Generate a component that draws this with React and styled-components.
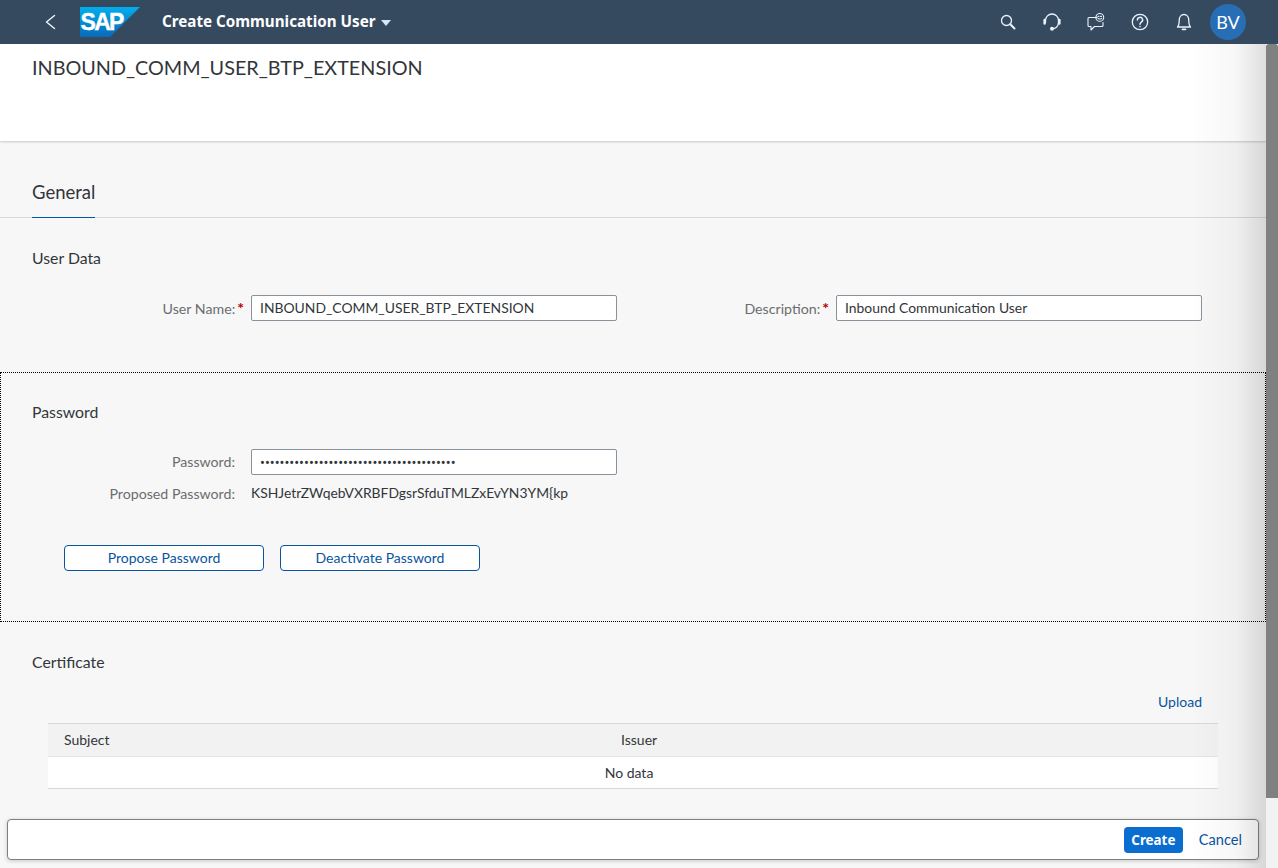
import React from 'react';
import styled, {createGlobalStyle} from 'styled-components';

const FONT = '"Lato", "Noto Sans", Arial, sans-serif';
const WIDE_FONT = '"Noto Sans", "Open Sans", Arial, sans-serif';

const Global = createGlobalStyle`
  html, body {
    margin: 0;
    height: 100%;
    overflow: hidden;
  }
  body {
    font-family: ${FONT};
    font-size: 14px;
    color: #32363a;
    background: #f7f7f7;
  }
`;

const Shell = styled.div`
  height: 868px;
  display: flex;
  flex-direction: column;
  position: relative;
  overflow: hidden;
`;

const TopBar = styled.header`
  height: 44px;
  flex: none;
  background: #354a5f;
  display: flex;
  align-items: center;
  color: #fff;
`;

const IconButton = styled.button`
  width: 44px;
  height: 44px;
  padding: 0;
  border: none;
  background: none;
  color: #e8f3ff;
  display: flex;
  align-items: center;
  justify-content: center;
`;

const BackButton = styled(IconButton)`
  width: 38px;
  margin-left: 42px;
  justify-content: flex-start;
`;

const Logo = styled.svg`
  width: 60px;
  height: 30px;
  flex: none;
`;

const AppTitle = styled.div`
  margin-left: 22px;
  font-family: ${WIDE_FONT};
  font-size: 15.2px;
  font-weight: 700;
  display: flex;
  align-items: center;
  gap: 5px;
  padding-bottom: 2px;
`;

const Caret = styled.span`
  width: 0;
  height: 0;
  border-left: 5px solid transparent;
  border-right: 5px solid transparent;
  border-top: 6px solid #d1e8ff;
  margin-top: 3px;
`;

const BarActions = styled.div`
  margin-left: auto;
  margin-right: 32px;
  display: flex;
  align-items: center;
`;

const Avatar = styled.div`
  width: 36px;
  height: 36px;
  border-radius: 50%;
  background: #286eb4;
  color: #fff;
  font-size: 18px;
  display: flex;
  align-items: center;
  justify-content: center;
  margin-left: 4px;
`;

const Body = styled.div`
  flex: 1;
  min-height: 0;
  display: flex;
`;

const Page = styled.main`
  flex: 1;
  min-width: 0;
  position: relative;
  overflow: hidden;
`;

const EdgeShade = styled.div`
  position: absolute;
  top: 0;
  right: 0;
  bottom: 0;
  width: 76px;
  background: linear-gradient(to right, rgba(0, 0, 0, 0), rgba(0, 0, 0, .03) 60%, rgba(0, 0, 0, .13));
  pointer-events: none;
  z-index: 3;
`;

const ScrollTrack = styled.div`
  width: 12px;
  flex: none;
  background: #f2f2f2;
`;

const ScrollThumb = styled.div`
  height: 754px;
  background: #808080;
  border-radius: 3px 3px 0 0;
`;

const TitleArea = styled.div`
  height: 97px;
  box-sizing: border-box;
  background: #fff;
  padding: 11px 32px 0;
  box-shadow: 0 1px 2px rgba(0, 0, 0, .2);
  position: relative;
`;

const Title = styled.h1`
  margin: 0;
  font-size: 19.8px;
  font-weight: 400;
  line-height: 25px;
`;

const Tabs = styled.div`
  height: 77px;
  box-sizing: border-box;
  border-bottom: 1px solid #d9d9d9;
  padding: 0 32px;
  display: flex;
  align-items: flex-end;
`;

const Tab = styled.div`
  height: 53px;
  box-sizing: border-box;
  margin-bottom: -1px;
  border-bottom: 1px solid #0854a0;
  font-size: 18.5px;
  line-height: 54px;
`;

const Section = styled.section`
  box-sizing: border-box;
  height: ${p => p.$height}px;
  padding: ${p => p.$top}px 32px 0;
  outline: ${p => (p.$focused ? '1px dotted #000' : 'none')};
  outline-offset: -1px;
`;

const SectionTitle = styled.h2`
  margin: 0;
  font-size: 15.8px;
  font-weight: 400;
  line-height: 20px;
`;

const FormGrid = styled.div`
  display: grid;
  grid-template-columns: 203px 366px 219px 366px;
  margin-top: 27px;
  align-items: center;
`;

const FieldLabel = styled.label`
  color: #6a6d70;
  text-align: right;
  white-space: nowrap;
  font-size: 14.2px;
  padding-bottom: 2px;
  margin-right: ${p => (p.$required ? '-9px' : '0')};
`;

const Star = styled.span`
  color: #b00;
  margin-left: 2px;
  font-size: 16px;
  font-weight: 700;
`;

const TextInput = styled.input`
  box-sizing: border-box;
  height: 26px;
  width: 366px;
  margin-left: 16px;
  padding: 0 8px 2px;
  border: 1px solid #89919a;
  border-radius: 2px;
  background: #fff;
  font: 13.9px ${FONT};
  color: #32363a;
`;

const PasswordInput = styled(TextInput)`
  font: 13px ${WIDE_FONT};
  padding-bottom: 0;
`;

const PasswordGrid = styled.div`
  display: grid;
  grid-template-columns: 203px 366px;
  row-gap: 7px;
  margin-top: 27px;
  align-items: center;
`;

const PlainValue = styled.div`
  font-size: 13.87px;
  white-space: nowrap;
  line-height: 22px;
  margin-left: 16px;
  padding-bottom: 2px;
`;

const ButtonRow = styled.div`
  display: flex;
  gap: 16px;
  margin: 39px 0 0 32px;
`;

const OutlineButton = styled.button`
  box-sizing: border-box;
  width: 200px;
  height: 26px;
  padding: 0 0 2px;
  border: 1px solid #0854a0;
  border-radius: 4px;
  background: #fff;
  color: #0854a0;
  font: 14px ${FONT};
`;

const TableTools = styled.div`
  display: flex;
  justify-content: flex-end;
  margin: 20px 32px 0 0;
`;

const LinkText = styled.a`
  color: #0854a0;
  font-size: 14px;
  line-height: 20px;
`;

const CancelLink = styled(LinkText)`
  font-size: 14.6px;
`;

const Table = styled.div`
  margin: 11px 16px 0 16px;
  width: 1170px;
`;

const TableHead = styled.div`
  height: 34px;
  box-sizing: border-box;
  background: #f2f2f2;
  border-top: 1px solid #d9d9d9;
  border-bottom: 1px solid #e5e5e5;
  display: grid;
  grid-template-columns: 557px 1fr;
  align-items: center;
  font-size: 14px;
  padding: 0 0 2px 16px;
`;

const EmptyRow = styled.div`
  height: 32px;
  box-sizing: border-box;
  background: #fff;
  border-bottom: 1px solid #d9d9d9;
  display: flex;
  align-items: center;
  justify-content: center;
  padding-right: 8px;
  font-size: 14px;
`;

const Footer = styled.footer`
  position: absolute;
  left: 7px;
  right: 7px;
  bottom: 8px;
  height: 41px;
  box-sizing: border-box;
  background: #fff;
  border: 1px solid #7f7f7f;
  border-radius: 4px;
  box-shadow: 0 1px 4px rgba(0, 0, 0, .2);
  display: flex;
  align-items: center;
  justify-content: flex-end;
  padding-right: 16px;
  gap: 16px;
  z-index: 2;
`;

const PrimaryButton = styled.button`
  box-sizing: border-box;
  width: 59px;
  height: 26px;
  padding: 1px 0 0;
  border: none;
  border-radius: 4px;
  background: #0a6ed1;
  color: #fff;
  font: 700 13.4px ${WIDE_FONT};
`;

const stroke = {
  fill: 'none',
  stroke: 'currentColor',
  strokeWidth: 1.3,
  strokeLinecap: 'round',
  strokeLinejoin: 'round'
};

const BackIcon = () => (
  <svg width="18" height="18" viewBox="0 0 18 18"><path d="M12.5 2.5 L4.5 9 L12.5 15.5" {...stroke} strokeWidth="1.5" /></svg>
);

const SearchIcon = () => (
  <svg width="18" height="18" viewBox="0 0 18 18" {...stroke}>
    <circle cx="7.5" cy="7.5" r="5" />
    <path d="M11.3 11.3 L15.5 15.5" strokeWidth="2" />
  </svg>
);

const HeadsetIcon = () => (
  <svg width="18" height="18" viewBox="0 0 18 18" {...stroke}>
    <path d="M2.5 9.5 V7.5 A6.5 6.5 0 0 1 15.5 7.5 V9.5 A6.5 7 0 0 1 10.5 15.7" />
    <path d="M1.6 7 V10.6" strokeWidth="2.4" />
    <path d="M16.4 7 V10.6" strokeWidth="2.4" />
    <circle cx="9" cy="15.8" r="1.3" fill="currentColor" />
  </svg>
);

const FeedbackIcon = () => (
  <svg width="18" height="18" viewBox="0 0 18 18" {...stroke} strokeWidth="1.1">
    <path d="M10 4.5 H2 A1 1 0 0 0 1 5.5 V12.5 A1 1 0 0 0 2 13.5 H4 V17 L7.5 13.5 H15 A1 1 0 0 0 16 12.5 V9.5" />
    <circle cx="12.8" cy="4.4" r="3.9" />
    <path d="M11 3.4 H11.9 M13.6 3.4 H14.5 M11 5.3 Q12.8 6.8 14.6 5.3" />
  </svg>
);

const HelpIcon = () => (
  <svg width="18" height="18" viewBox="0 0 18 18" {...stroke}>
    <circle cx="9" cy="9" r="7.7" />
    <path d="M6.4 7 A2.6 2.6 0 1 1 10.3 9.2 C9.3 9.8 9 10.3 9 11.3" strokeWidth="1.5" />
    <circle cx="9" cy="13.6" r=".8" fill="currentColor" stroke="none" />
  </svg>
);

const BellIcon = () => (
  <svg width="18" height="18" viewBox="0 0 18 18" {...stroke}>
    <path d="M2.5 14 C4 12.5 4.2 11 4.2 7.5 C4.2 4 6.2 1.5 9 1.5 C11.8 1.5 13.8 4 13.8 7.5 C13.8 11 14 12.5 15.5 14 Z" />
    <path d="M7.5 16.3 H10.5" strokeWidth="1.8" />
  </svg>
);

const SapLogo = () => (
  <Logo viewBox="0 0 60 30">
    <defs>
      <linearGradient id="sapBlue" x1="0" y1="0" x2="0" y2="1">
        <stop offset="0" stopColor="#00aeef" />
        <stop offset="1" stopColor="#0a6ab8" />
      </linearGradient>
    </defs>
    <polygon points="0,0 60,0 30,30 0,30" fill="url(#sapBlue)" />
    <text x="0.5" y="23" fontFamily="Liberation Sans, Arial, sans-serif" fontWeight="700" fontSize="23" letterSpacing="-1.7" fill="#fff" stroke="#fff" strokeWidth=".4">SAP</text>
  </Logo>
);

const App = () => {
  return (
    <Shell>
      <Global />
      <TopBar>
        <BackButton><BackIcon /></BackButton>
        <SapLogo />
        <AppTitle>Create Communication User<Caret /></AppTitle>
        <BarActions>
          <IconButton><SearchIcon /></IconButton>
          <IconButton><HeadsetIcon /></IconButton>
          <IconButton><FeedbackIcon /></IconButton>
          <IconButton><HelpIcon /></IconButton>
          <IconButton><BellIcon /></IconButton>
          <Avatar>BV</Avatar>
        </BarActions>
      </TopBar>
      <Body>
        <Page>
          <TitleArea><Title>INBOUND_COMM_USER_BTP_EXTENSION</Title></TitleArea>
          <Tabs><Tab>General</Tab></Tabs>
          <Section $height={154} $top={30}>
            <SectionTitle>User Data</SectionTitle>
            <FormGrid>
              <FieldLabel $required>User Name:<Star>*</Star></FieldLabel>
              <TextInput readOnly value="INBOUND_COMM_USER_BTP_EXTENSION" />
              <FieldLabel $required>Description:<Star>*</Star></FieldLabel>
              <TextInput readOnly value="Inbound Communication User" />
            </FormGrid>
          </Section>
          <Section $height={250} $top={30} $focused>
            <SectionTitle>Password</SectionTitle>
            <PasswordGrid>
              <FieldLabel>Password:</FieldLabel>
              <PasswordInput readOnly type="password" value="KSHJetrZWqebVXRBFDgsrSfduTMLZxEvYN3YM{kp" />
              <FieldLabel>Proposed Password:</FieldLabel>
              <PlainValue>KSHJetrZWqebVXRBFDgsrSfduTMLZxEvYN3YM{'{'}kp</PlainValue>
            </PasswordGrid>
            <ButtonRow>
              <OutlineButton>Propose Password</OutlineButton>
              <OutlineButton>Deactivate Password</OutlineButton>
            </ButtonRow>
          </Section>
          <Section $height={200} $top={30}>
            <SectionTitle>Certificate</SectionTitle>
            <TableTools><LinkText>Upload</LinkText></TableTools>
            <Table>
              <TableHead><span>Subject</span><span>Issuer</span></TableHead>
              <EmptyRow>No data</EmptyRow>
            </Table>
          </Section>
          <EdgeShade />
          <Footer>
            <PrimaryButton>Create</PrimaryButton>
            <CancelLink>Cancel</CancelLink>
          </Footer>
        </Page>
        <ScrollTrack><ScrollThumb /></ScrollTrack>
      </Body>
    </Shell>
  );
};

export default App;
